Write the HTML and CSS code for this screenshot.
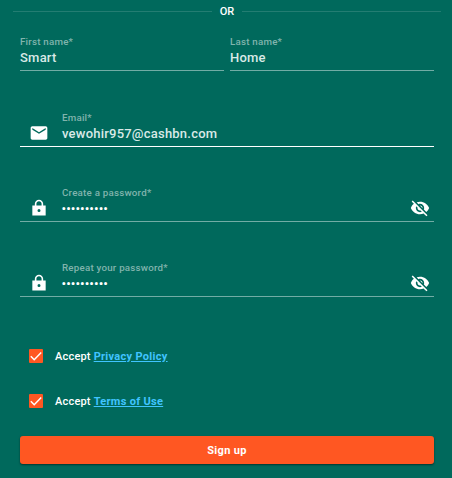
FILE: index.html
```html
<!DOCTYPE html>
<html lang="en">
<head>
<meta charset="utf-8">
<title>Sign up</title>
<link rel="stylesheet" href="styles.css">
</head>
<body>
<svg class="defs" aria-hidden="true">
  <symbol id="mail" viewBox="0 0 24 24"><path d="M20 4H4c-1.100 0-2 .9-2 2v12c0 1.100.9 2 2 2h16c1.100 0 2-.9 2-2V6c0-1.100-.9-2-2-2zm0 4l-8 5-8-5V6l8 5 8-5v2z"/></symbol>
  <symbol id="lock" viewBox="0 0 24 24"><path fill-rule="evenodd" d="M20 9h-3V7c0-2.760-2.240-5-5-5S7 4.240 7 7v2H4v12h16V9zM12 16.800a1.800 1.800 0 1 1 0-3.600 1.800 1.800 0 0 1 0 3.600zM15.100 9H8.900V7c0-1.710 1.390-3.100 3.100-3.100s3.100 1.390 3.100 3.100v2z"/></symbol>
  <symbol id="eye-off" viewBox="0 0 24 24"><path d="M12 7c2.760 0 5 2.240 5 5 0 .65-.13 1.260-.36 1.830l2.920 2.920c1.510-1.260 2.700-2.890 3.430-4.750-1.730-4.390-6-7.500-11-7.500-1.400 0-2.740.25-3.980.7l2.160 2.160C10.740 7.130 11.350 7 12 7zM2 4.270l2.280 2.280.46.46C3.080 8.300 1.780 10.020 1 12c1.730 4.390 6 7.500 11 7.500 1.550 0 3.030-.3 4.380-.84l.42.42L19.730 22 21 20.730 3.270 3 2 4.270zM7.530 9.800l1.550 1.550c-.05.21-.08.43-.08.650 0 1.660 1.340 3 3 3 .22 0 .44-.03.650-.08l1.550 1.550c-.67.33-1.410.53-2.200.53-2.760 0-5-2.240-5-5 0-.79.2-1.530.53-2.200zm4.310-.78l3.150 3.150.02-.16c0-1.660-1.340-3-3-3l-.17.01z"/></symbol>
</svg>
<div class="divider"><span>OR</span></div>
<form class="form">
  <div class="names">
    <label class="field"><span class="text"><span class="label">First name*</span><span class="value">Smart</span></span></label>
    <label class="field"><span class="text"><span class="label">Last name*</span><span class="value">Home</span></span></label>
  </div>
  <label class="field wide focused">
    <svg class="icon lead"><use href="#mail"/></svg>
    <span class="text"><span class="label">Email*</span><span class="value">vewohir957@cashbn.com</span></span>
  </label>
  <label class="field wide">
    <svg class="icon lead"><use href="#lock"/></svg>
    <span class="text"><span class="label">Create a password*</span><span class="value secret">••••••••••</span></span>
    <svg class="icon eye"><use href="#eye-off"/></svg>
  </label>
  <label class="field wide">
    <svg class="icon lead"><use href="#lock"/></svg>
    <span class="text"><span class="label">Repeat your password*</span><span class="value secret">••••••••••</span></span>
    <svg class="icon eye"><use href="#eye-off"/></svg>
  </label>
  <div class="check"><span class="box"><svg viewBox="0 0 14 14"><path d="M1.800 7.300l3.400 3.400 7-7.200"/></svg></span><span>Accept <a href="#">Privacy Policy</a></span></div>
  <div class="check"><span class="box"><svg viewBox="0 0 14 14"><path d="M1.800 7.300l3.400 3.400 7-7.200"/></svg></span><span>Accept <a href="#">Terms of Use</a></span></div>
  <button class="submit" type="button">Sign up</button>
</form>
</body>
</html>
```
FILE: styles.css
```css
* { box-sizing: border-box; }
body {
  margin: 0;
  height: 478px;
  overflow: hidden;
  background: #00695c;
  color: #fff;
  font-family: Roboto, "Liberation Sans", sans-serif;
}
.defs { display: none; }
.divider {
  display: flex;
  align-items: center;
  gap: 8px;
  height: 23px;
  padding: 0 11px 0 13px;
  font-size: 11px;
  font-weight: 500;
}
.divider::before, .divider::after {
  content: "";
  flex: 1;
  height: 1px;
  background: #237d72;
}
.form { padding: 0 18px 0 20px; }
.names { display: flex; gap: 6px; }
.names .field { flex: 1; }
.field {
  display: flex;
  height: 48px;
  border-bottom: 1px solid #72aca5;
}
.field.wide { height: 47px; margin-top: 29px; padding: 0 4px 0 9px; }
.field.wide + .wide { margin-top: 28px; }
.focused { border-bottom-color: #fff; }
.text { display: flex; flex-direction: column; flex: 1; padding-top: 12px; }
.wide .text { padding-top: 11px; }
.label {
  height: 14px;
  line-height: 14px;
  font-size: 9.750px;
  font-weight: 500;
  letter-spacing: .22px;
  color: #80b4ad;
}
.value {
  height: 18px;
  line-height: 18px;
  font-size: 13px;
  font-weight: 500;
  letter-spacing: .22px;
  color: #d9e9e7;
}
.secret { letter-spacing: .1px; margin-left: -.5px; color: #fff; }
.icon { width: 20px; height: 20px; fill: #fff; margin-top: 23px; flex: none; }
.lead { margin-right: 13px; }
.check {
  display: flex;
  align-items: flex-start;
  height: 15px;
  line-height: 15px;
  margin-top: 30px;
  padding-left: 9px;
  gap: 12px;
  font-size: 11px;
  font-weight: 500;
  letter-spacing: .2px;
}
.wide + .check { margin-top: 52px; }
.check a { color: #40c4ff; font-weight: 700; letter-spacing: .3px; }
.box { width: 14px; height: 14px; border-radius: 1px; background: #ff5722; }
.box svg { display: block; fill: none; stroke: #fff; stroke-width: 1.500; }
.submit {
  display: block;
  width: 100%;
  height: 28px;
  margin-top: 27px;
  padding: 0;
  border: 0;
  border-radius: 3px;
  background: #ff5722;
  box-shadow: 0 1px 2px rgba(0, 0, 0, .5);
  color: #fff;
  font: 700 11px Roboto, sans-serif;
  letter-spacing: .35px;
}
```
